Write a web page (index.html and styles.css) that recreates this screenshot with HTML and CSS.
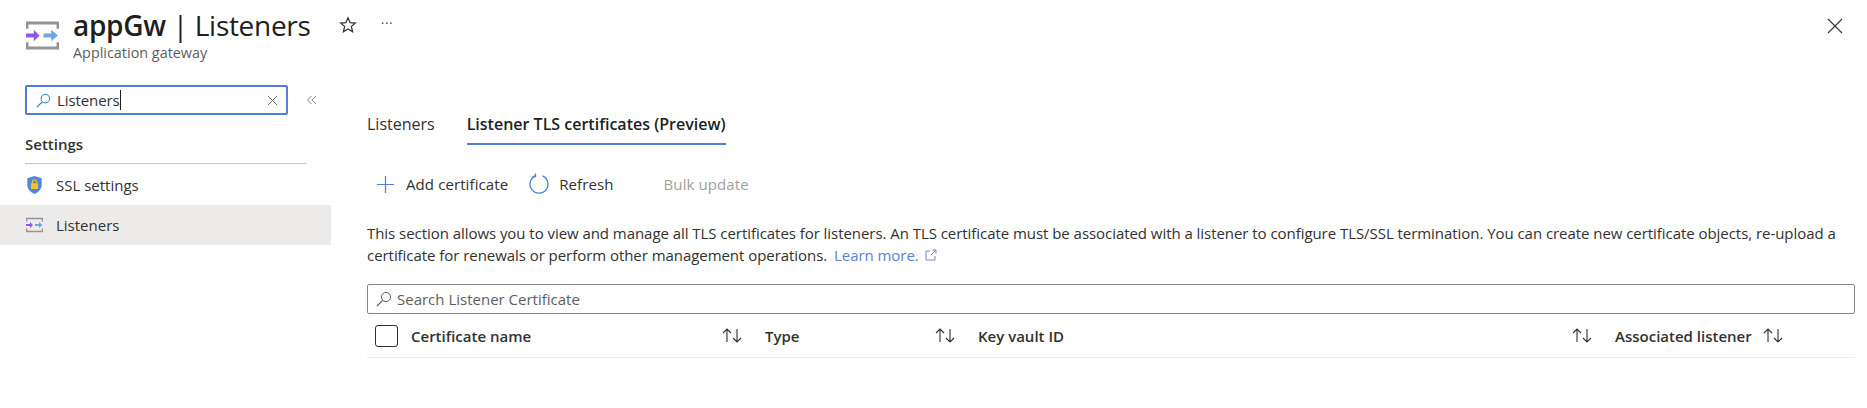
FILE: index.html
```html
<!DOCTYPE html>
<html lang="en">
<head>
    <meta charset="UTF-8">
    <title>appGw | Listeners</title>
    <link rel="stylesheet" href="styles.css">
</head>
<body>
<div class="blade">
    <header class="blade-header">
        <svg class="gw-icon" viewBox="0 0 34 30">
            <path d="M1 8V2h32v6M1 22v6h32v-6" fill="none" stroke="#949494" stroke-width="3"/>
            <path d="M0 13h8V9l6 6-6 6v-4H0z" fill="#8c5be0"/>
            <path d="M18 13h8V9l7 6-7 6v-4h-8z" fill="#6ea6ee"/>
        </svg>
        <div class="title-block">
            <h1><b>appGw</b> | Listeners</h1>
            <p>Application gateway</p>
        </div>
        <svg class="star" viewBox="0 0 18 18">
            <path d="M9 1.800l2.100 4.900 5.200.4-4 3.400 1.300 5.200L9 13l-4.600 2.700 1.300-5.200-4-3.400 5.200-.4z" fill="none" stroke="#323130" stroke-width="1.200"/>
        </svg>
        <span class="more">···</span>
        <svg class="close" viewBox="0 0 16 16">
            <path d="M1 1l14 14M15 1L1 15" stroke="#323130" stroke-width="1.100"/>
        </svg>
    </header>

    <div class="blade-body">
        <aside class="sidebar">
            <div class="menu-search-row">
                <div class="menu-search">
                    <svg class="search-icon" viewBox="0 0 16 16">
                        <circle cx="10" cy="6" r="4.600" fill="none" stroke="#0078d4" stroke-width="1"/>
                        <path d="M6.600 9.400L1 15" stroke="#0078d4" stroke-width="1.100"/>
                    </svg>
                    <div class="menu-search-value"><span class="menu-search-text">Listeners</span></div>
                    <svg class="clear" viewBox="0 0 12 12">
                        <path d="M1 1l10 10M11 1L1 11" stroke="#605e5c" stroke-width="1"/>
                    </svg>
                </div>
                <svg class="collapse" viewBox="0 0 12 12">
                    <path d="M5.500 2L1.500 6l4 4M10 2L6 6l4 4" fill="none" stroke="#8a8886" stroke-width="1"/>
                </svg>
            </div>
            <h2 class="menu-group">Settings</h2>
            <a class="menu-item">
                <svg class="menu-icon" viewBox="0 0 18 20">
                    <path d="M9 0l8 2.500V10c0 5-4 8-8 10-4-2-8-5-8-10V2.500z" fill="#4f86d9"/>
                    <rect x="5" y="8" width="8" height="6.500" rx="1" fill="#f5c12e"/>
                    <path d="M6.700 8V6.500a2.300 2.300 0 0 1 4.600 0V8" fill="none" stroke="#f5c12e" stroke-width="1.400"/>
                </svg>
                SSL settings
            </a>
            <a class="menu-item selected">
                <svg class="menu-icon" viewBox="0 0 34 30">
                    <path d="M1 8V2h32v6M1 22v6h32v-6" fill="none" stroke="#949494" stroke-width="3"/>
                    <path d="M0 13h8V9l6 6-6 6v-4H0z" fill="#8c5be0"/>
                    <path d="M18 13h8V9l7 6-7 6v-4h-8z" fill="#6ea6ee"/>
                </svg>
                Listeners
            </a>
        </aside>

        <main class="content">
            <nav class="tabs">
                <a class="tab">Listeners</a>
                <a class="tab active">Listener TLS certificates (Preview)</a>
            </nav>

            <div class="toolbar">
                <button class="tool add">
                    <svg viewBox="0 0 20 20"><path d="M10 1v18M1 10h18" stroke="#4f7fd6" stroke-width="1.300"/></svg>
                    Add certificate
                </button>
                <button class="tool refresh">
                    <svg viewBox="0 0 22 22">
                        <path d="M7.500 2.800a9 9 0 1 0 7 0" fill="none" stroke="#4f7fd6" stroke-width="1.300"/>
                        <path d="M7.500 .5v3h-3" fill="none" stroke="#4f7fd6" stroke-width="1.300"/>
                    </svg>
                    Refresh
                </button>
                <button class="tool disabled">Bulk update</button>
            </div>

            <p class="description">This section allows you to view and manage all TLS certificates for listeners. An TLS certificate must be associated with a listener to configure TLS/SSL termination. You can create new certificate objects, re-upload a certificate for renewals or perform other management operations. <a class="learn-more">Learn more.
                <svg viewBox="0 0 12 12"><path d="M5 2H1v9h9V7M6 6l5-5M7.500 1H11v3.500" fill="none" stroke="#6b85d8" stroke-width="1"/></svg></a></p>

            <div class="cert-search">
                <svg viewBox="0 0 16 16">
                    <circle cx="10" cy="6" r="4.600" fill="none" stroke="#605e5c" stroke-width="1"/>
                    <path d="M6.600 9.400L1 15" stroke="#605e5c" stroke-width="1.100"/>
                </svg>
                <span>Search Listener Certificate</span>
            </div>

            <div class="grid-header">
                <div class="check-cell"><span class="checkbox"></span></div>
                <div class="col col-name">Certificate name
                    <svg class="sort" viewBox="0 0 21 15"><path d="M5 14V1M1 5l4-4 4 4M15 1v13M11 10l4 4 4-4" fill="none" stroke="#323130" stroke-width="1.100"/></svg>
                </div>
                <div class="col col-type">Type
                    <svg class="sort" viewBox="0 0 21 15"><path d="M5 14V1M1 5l4-4 4 4M15 1v13M11 10l4 4 4-4" fill="none" stroke="#323130" stroke-width="1.100"/></svg>
                </div>
                <div class="col col-vault">Key vault ID
                    <svg class="sort" viewBox="0 0 21 15"><path d="M5 14V1M1 5l4-4 4 4M15 1v13M11 10l4 4 4-4" fill="none" stroke="#323130" stroke-width="1.100"/></svg>
                </div>
                <div class="col col-listener">Associated listener
                    <svg class="sort" viewBox="0 0 21 15"><path d="M5 14V1M1 5l4-4 4 4M15 1v13M11 10l4 4 4-4" fill="none" stroke="#323130" stroke-width="1.100"/></svg>
                </div>
            </div>
        </main>
    </div>
</div>
</body>
</html>
```

FILE: styles.css
```css
* {
    box-sizing: border-box;
}
body {
    margin: 0;
    background: #fff;
    color: #323130;
    font-family: "Open Sans", "Noto Sans", sans-serif;
    font-size: 15px;
    overflow: hidden;
}
svg {
    display: block;
    flex: none;
}
.blade {
    height: 408px;
}
.blade-header {
    display: flex;
    align-items: flex-start;
    height: 72px;
    padding: 9px 24px 0 26px;
}
.gw-icon {
    width: 33px;
    height: 29px;
    margin-top: 12px;
}
.title-block {
    margin-left: 14px;
    width: 267px;
}
.title-block h1 {
    margin: 0;
    font-size: 28px;
    font-weight: 400;
    line-height: 32px;
    letter-spacing: -0.3px;
    color: #201f1e;
}
.title-block h1 b {
    font-weight: 600;
}
.title-block p {
    margin: 3px 0 0;
    font-size: 14.400px;
    line-height: 18px;
    color: #605e5c;
}
.star {
    width: 18px;
    height: 18px;
    margin: 7px 0 0 -1px;
}
.more {
    margin: 6px 0 0 24px;
    font-size: 12px;
    letter-spacing: 1px;
    line-height: 18px;
}
.close {
    width: 16px;
    height: 16px;
    margin: 9px 0 0 auto;
}

.blade-body {
    display: flex;
}
.sidebar {
    width: 331px;
    flex: none;
}
.menu-search-row {
    display: flex;
    align-items: center;
    padding: 13px 0 0 25px;
}
.menu-search {
    display: flex;
    align-items: center;
    width: 263px;
    height: 30px;
    padding: 0 8px;
    border: 2px solid #4f7fd6;
    border-radius: 2px;
}
.search-icon {
    width: 15px;
    height: 15px;
    margin-left: 1px;
}
.menu-search-value {
    flex: 1;
    margin-left: 6px;
}
.menu-search-text {
    display: inline-block;
    font-size: 15px;
    line-height: 20px;
    border-right: 1px solid #201f1e;
    letter-spacing: -0.1px;
}
.clear {
    width: 11px;
    height: 11px;
}
.collapse {
    width: 12px;
    height: 12px;
    margin-left: 18px;
}
.menu-group {
    margin: 20px 0 0 25px;
    width: 281px;
    padding-bottom: 9px;
    border-bottom: 1px solid #c8c6c4;
    font-size: 15px;
    font-weight: 600;
    line-height: 19px;
}
.menu-item {
    display: flex;
    align-items: center;
    height: 40px;
    padding-left: 26px;
    font-size: 15px;
}
.menu-item:first-of-type {
    height: 41px;
}
.menu-item.selected {
    background: #edebe9;
}
.menu-icon {
    width: 17px;
    height: 18px;
    margin-right: 13px;
}

.content {
    flex: 1;
    padding-left: 36px;
    padding-right: 12px;
    min-width: 0;
}
.tabs {
    display: flex;
    gap: 32px;
    margin-top: 37px;
}
.tab {
    height: 36px;
    padding-top: 4px;
    font-size: 16px;
    line-height: 22px;
}
.tab.active {
    font-weight: 600;
    color: #201f1e;
    border-bottom: 2px solid #4f7fd6;
}
.toolbar {
    display: flex;
    align-items: center;
    height: 32px;
    margin-top: 23px;
    padding-left: 9px;
}
.tool {
    display: flex;
    align-items: center;
    padding: 0;
    border: none;
    background: none;
    color: #323130;
    font-family: inherit;
    font-size: 15px;
    letter-spacing: 0.1px;
}
.tool svg {
    width: 19px;
    height: 19px;
}
.add svg {
    margin-right: 11px;
}
.refresh {
    margin-left: 20px;
}
.refresh svg {
    width: 22px;
    height: 22px;
    margin-right: 9px;
}
.disabled {
    margin-left: 50px;
    color: #a19f9d;
}
.description {
    margin: 23px 0 0;
    font-size: 15px;
    line-height: 21.500px;
    letter-spacing: -0.05px;
    color: #323130;
}
.learn-more {
    margin-left: 3px;
    color: #5b7fd9;
}
.learn-more svg {
    display: inline-block;
    width: 12px;
    height: 12px;
    margin-left: 2px;
}
.cert-search {
    display: flex;
    align-items: center;
    height: 30px;
    margin-top: 18px;
    padding-left: 8px;
    border: 1px solid #8a8886;
    border-radius: 2px;
}
.cert-search svg {
    width: 16px;
    height: 16px;
}
.cert-search span {
    margin-left: 5px;
    font-size: 15px;
    color: #605e5c;
}
.grid-header {
    display: flex;
    align-items: center;
    height: 44px;
    padding-left: 8px;
    border-bottom: 1px solid #edebe9;
    font-size: 15px;
    font-weight: 600;
}
.check-cell {
    width: 36px;
    flex: none;
}
.checkbox {
    display: block;
    width: 23px;
    height: 22px;
    border: 1px solid #323130;
    border-radius: 3px;
}
.col {
    display: flex;
    align-items: center;
    justify-content: space-between;
    flex: none;
    padding-right: 22px;
}
.col-name {
    width: 354px;
}
.col-type {
    width: 213px;
}
.col-vault {
    width: 637px;
}
.col-listener {
    width: 191px;
}
.sort {
    width: 21px;
    height: 15px;
}
```
